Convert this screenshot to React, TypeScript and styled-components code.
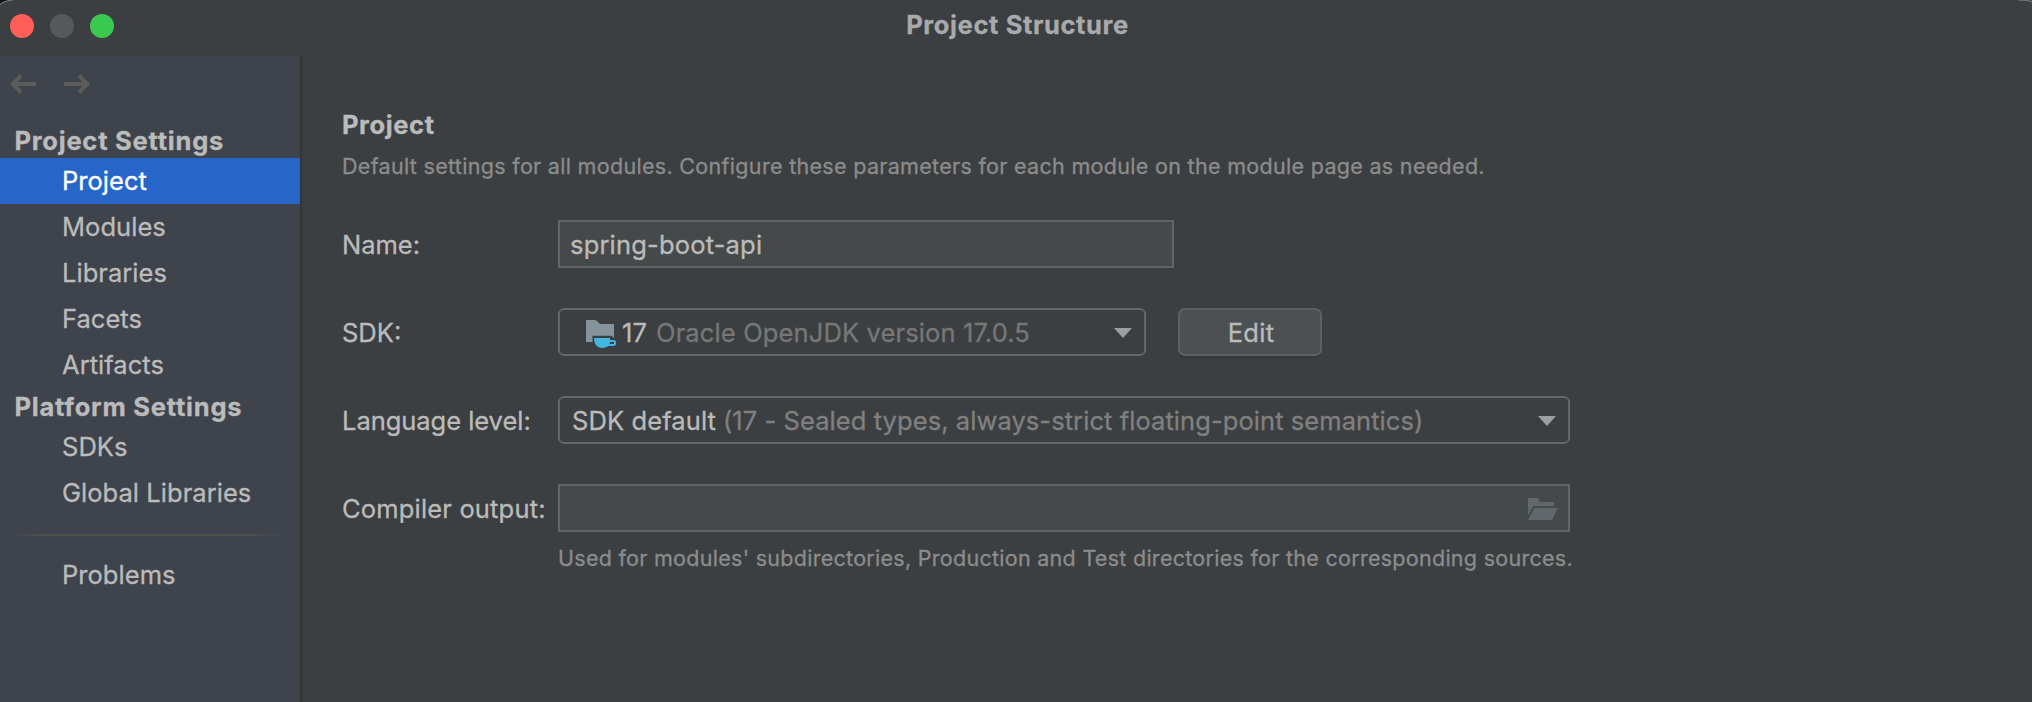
import React from 'react';
import styled, { createGlobalStyle } from 'styled-components';

const GlobalStyle = createGlobalStyle`
  *, *::before, *::after { box-sizing: border-box; }
  body {
    margin: 0;
    background: #3c3f41;
    color: #bbbbbb;
    font-family: Inter, "Liberation Sans", sans-serif;
    font-size: 25.5px;
    letter-spacing: 0.1px;
    -webkit-text-stroke: 0.3px currentColor;
  }
`;

const Window = styled.div`
  position: relative;
  display: flex;
  flex-direction: column;
  height: 702px;
  overflow: hidden;
  background: #3c3f41;
`;

const WindowCorner = styled.svg<{ $side: 'left' | 'right' }>`
  position: absolute;
  top: 0;
  ${({ $side }) => $side}: 0;
`;

const TitleBar = styled.header`
  display: grid;
  grid-template-columns: 1fr auto 1fr;
  align-items: start;
  height: 56px;
  flex: none;
`;

const TrafficLights = styled.div`
  display: flex;
  gap: 16px;
  padding: 14px 0 0 10px;
`;

const Light = styled.span<{ $color: string }>`
  width: 24px;
  height: 24px;
  border-radius: 50%;
  background: ${({ $color }) => $color};
`;

const Title = styled.h1`
  margin: 0;
  padding-left: 3px;
  font-size: inherit;
  font-weight: 700;
  line-height: 49px;
  letter-spacing: 0.63px;
  color: #a9aaab;
`;

const Body = styled.div`
  display: flex;
  flex: 1;
  min-height: 0;
`;

const Sidebar = styled.nav`
  width: 302px;
  flex: none;
  background: #3f434c;
  border-right: 2px solid #353537;
`;

const HistoryBar = styled.div`
  display: flex;
  gap: 28px;
  height: 66px;
  padding: 18px 0 0 10px;
`;

const SectionHeader = styled.div`
  height: 36px;
  padding-left: 14.5px;
  font-weight: 700;
  line-height: 37px;
  letter-spacing: 0.77px;
`;

const NavItem = styled.div<{ $selected?: boolean }>`
  height: 46px;
  padding-left: 62px;
  line-height: 46px;
  letter-spacing: 0.04px;
  color: ${({ $selected }) => ($selected ? '#ffffff' : 'inherit')};
  background: ${({ $selected }) => ($selected ? '#2666c8' : 'transparent')};
`;

const NavDivider = styled.div`
  height: 2px;
  margin: 18px 13px 16px 8px;
  background: linear-gradient(90deg, #51515100, #51514f 14%, #51514f 84%, #51515100);
`;

const Content = styled.main`
  flex: 1;
  padding: 51px 0 0 40px;
`;

const Heading = styled.h2`
  margin: 0;
  font-size: inherit;
  font-weight: 700;
  line-height: 35px;
  letter-spacing: 0.6px;
`;

const Description = styled.p`
  margin: 9px 0 39px;
  font-size: 21.5px;
  line-height: 30px;
  letter-spacing: 0.31px;
  color: #8c8c8c;
`;

const Form = styled.div`
  display: grid;
  grid-template-columns: 216px 1012px;
  row-gap: 40px;
`;

const Label = styled.label<{ $tracking?: number }>`
  line-height: 49px;
  height: 48px;
  white-space: nowrap;
  letter-spacing: ${({ $tracking = 0 }) => $tracking}px;
`;

const FieldRow = styled.div`
  display: flex;
  gap: 32px;
`;

const Input = styled.div<{ $width: number }>`
  display: flex;
  width: ${({ $width }) => $width}px;
  height: 48px;
  padding: 0 10px;
  border: 2px solid #646464;
  background: #45494a;
  line-height: 45px;
  letter-spacing: 0.18px;
`;

const Select = styled.div<{ $width: number; $indent: number }>`
  display: flex;
  width: ${({ $width }) => $width}px;
  height: 48px;
  padding: 0 12px 0 ${({ $indent }) => $indent}px;
  border: 2px solid #646464;
  border-radius: 6px;
  line-height: 45px;
  white-space: nowrap;
`;

const Hint = styled.span<{ $color: string; $gap: number; $tracking: number }>`
  flex: 1;
  margin-left: ${({ $gap }) => $gap}px;
  color: ${({ $color }) => $color};
  letter-spacing: ${({ $tracking }) => $tracking}px;
`;

const Caret = styled.svg`
  flex: none;
  margin-top: 18px;
`;

const SdkGlyph = styled.svg`
  flex: none;
  margin: 10px 6px 0 0;
`;

const BrowseGlyph = styled.svg`
  margin: 12px 0 0 auto;
`;

const Button = styled.button`
  width: 144px;
  height: 48px;
  padding: 0 0 0 2px;
  border: 2px solid #5e6060;
  border-radius: 7px;
  background: #4c5052;
  box-shadow: 0 4px 0 -1px #37393a;
  color: inherit;
  font: inherit;
  line-height: 45px;
  letter-spacing: 0.3px;
`;

const FieldNote = styled.p`
  grid-column: 2;
  margin: -29px 0 0;
  font-size: 21.5px;
  line-height: 30px;
  letter-spacing: 0.28px;
  white-space: nowrap;
  color: #8c8c8c;
`;

const BackArrow = () => (
  <svg width="26" height="20" viewBox="0 0 26 20" fill="none" stroke="#5c5c5b" strokeWidth="4">
    <path d="M26 10H4M11 1.5L2.7 10L11 18.5" />
  </svg>
);

const ForwardArrow = () => (
  <svg width="26" height="20" viewBox="0 0 26 20" fill="none" stroke="#5c5c5b" strokeWidth="4">
    <path d="M0 10H22M15 1.5L23.3 10L15 18.5" />
  </svg>
);

const DownCaret = () => (
  <Caret width="18" height="10" viewBox="0 0 18 10">
    <path d="M0 0H18L9 10Z" fill="#9a9fa3" />
  </Caret>
);

const SdkIcon = () => (
  <SdkGlyph width="30" height="28" viewBox="0 0 30 28">
    <path d="M0 0H8.5Q10.5 0 12 2L14 4H28V17.5H26.5V15.7H6.5V22H0Z" fill="#87939a" />
    <path
      d="M8 18H24V20H27.5Q30 20 30 22V23.5Q30 26 27.5 26H22.3Q20 28 16 28Q8 27.5 8 18ZM24 22Q24 23 23.6 24H28V22Z"
      fill="#40b6e0"
      fillRule="evenodd"
    />
  </SdkGlyph>
);

const FolderIcon = () => (
  <BrowseGlyph width="30" height="22" viewBox="0 0 30 22" fill="#60686c">
    <path d="M0 0H10L12 4H26V8H5.3L0 17.3Z" />
    <path d="M6.2 10H30L24 22H0Z" />
  </BrowseGlyph>
);

const projectItems = ['Project', 'Modules', 'Libraries', 'Facets', 'Artifacts'];
const platformItems = ['SDKs', 'Global Libraries'];

export default function App() {
  return (
    <>
      <GlobalStyle />
      <Window>
        <TitleBar>
          <TrafficLights>
            <Light $color="#ff5f58" />
            <Light $color="#55595c" />
            <Light $color="#3bc84f" />
          </TrafficLights>
          <Title>Project Structure</Title>
        </TitleBar>
        <Body>
          <Sidebar>
            <HistoryBar>
              <BackArrow />
              <ForwardArrow />
            </HistoryBar>
            <SectionHeader>Project Settings</SectionHeader>
            {projectItems.map((item) => (
              <NavItem key={item} $selected={item === 'Project'}>
                {item}
              </NavItem>
            ))}
            <SectionHeader>Platform Settings</SectionHeader>
            {platformItems.map((item) => (
              <NavItem key={item}>{item}</NavItem>
            ))}
            <NavDivider />
            <NavItem>Problems</NavItem>
          </Sidebar>
          <Content>
            <Heading>Project</Heading>
            <Description>
              Default settings for all modules. Configure these parameters for each module on the module page as needed.
            </Description>
            <Form>
              <Label>Name:</Label>
              <Input $width={616}>spring-boot-api</Input>
              <Label>SDK:</Label>
              <FieldRow>
                <Select $width={588} $indent={26}>
                  <SdkIcon />
                  <span>17</span>
                  <Hint $color="#777777" $gap={9} $tracking={0.13}>
                    Oracle OpenJDK version 17.0.5
                  </Hint>
                  <DownCaret />
                </Select>
                <Button>Edit</Button>
              </FieldRow>
              <Label $tracking={-0.04}>Language level:</Label>
              <Select $width={1012} $indent={12}>
                <span>SDK default</span>
                <Hint $color="#808080" $gap={7} $tracking={0.07}>
                  (17 - Sealed types, always-strict floating-point semantics)
                </Hint>
                <DownCaret />
              </Select>
              <Label $tracking={0.17}>Compiler output:</Label>
              <Input $width={1012}>
                <FolderIcon />
              </Input>
              <FieldNote>
                Used for modules' subdirectories, Production and Test directories for the corresponding sources.
              </FieldNote>
            </Form>
          </Content>
        </Body>
        <WindowCorner $side="left" width="16" height="8" viewBox="0 0 16 8">
          <path d="M0 0H8Q3 1 0 4Z" fill="#111214" />
          <path d="M0 4.5Q4 1 13 0" fill="none" stroke="#75787a" strokeWidth="1.2" />
        </WindowCorner>
        <WindowCorner $side="right" width="16" height="4" viewBox="0 0 16 4">
          <path d="M2 0Q11 0 16 2" fill="none" stroke="#75787a" strokeWidth="1.2" />
        </WindowCorner>
      </Window>
    </>
  );
}
